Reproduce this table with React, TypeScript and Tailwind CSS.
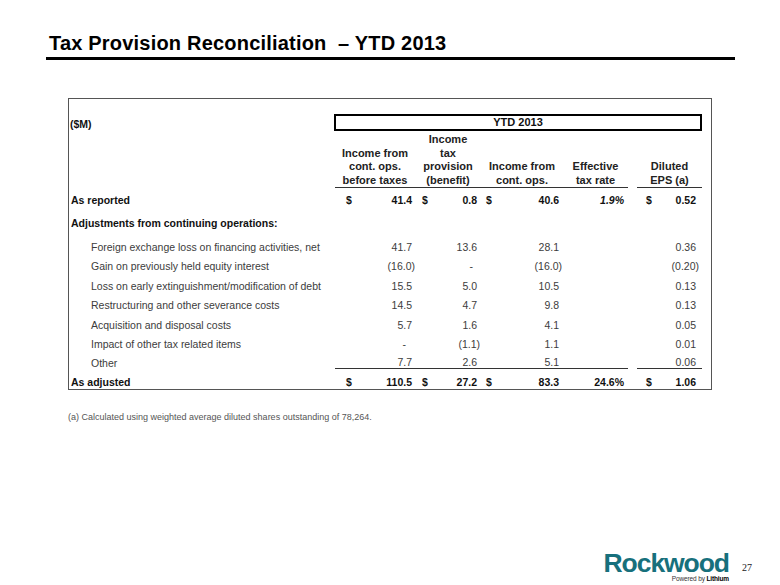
import React from "react";

type Col = {
  w: string;
  pl: string;
  pr: string;
  prParen: string;
  prDash: string;
};

// column geometry: c1..c4 share one underline, c5 (EPS) has its own
const cols: Col[] = [
  { w: "w-[80px]", pl: "pl-[11px]", pr: "pr-[3px]", prParen: "pr-0", prDash: "pr-[9px]" },
  { w: "w-[66px]", pl: "pl-[7px]", pr: "pr-[4px]", prParen: "pr-[1px]", prDash: "pr-[8px]" },
  { w: "w-[82px]", pl: "pl-[5px]", pr: "pr-[4px]", prParen: "pr-[1px]", prDash: "pr-[10px]" },
  { w: "w-[65px]", pl: "pl-0", pr: "pr-[4px]", prParen: "pr-[1px]", prDash: "pr-[10px]" },
  { w: "w-[65px]", pl: "pl-[9px]", pr: "pr-[6px]", prParen: "pr-[3px]", prDash: "pr-[12px]" },
];

interface Row {
  label: string;
  values: (string | null)[];
}

const adjustments: Row[] = [
  { label: "Foreign exchange loss on financing activities, net", values: ["41.7", "13.6", "28.1", null, "0.36"] },
  { label: "Gain on previously held equity interest", values: ["(16.0)", "-", "(16.0)", null, "(0.20)"] },
  { label: "Loss on early extinguishment/modification of debt", values: ["15.5", "5.0", "10.5", null, "0.13"] },
  { label: "Restructuring and other severance costs", values: ["14.5", "4.7", "9.8", null, "0.13"] },
  { label: "Acquisition and disposal costs", values: ["5.7", "1.6", "4.1", null, "0.05"] },
  { label: "Impact of other tax related items", values: ["-", "(1.1)", "1.1", null, "0.01"] },
];

function Cell({
  col,
  value,
  dollar,
  underline,
  extra,
}: {
  col: Col;
  value: string | null;
  dollar?: boolean;
  underline?: boolean;
  extra?: string;
}) {
  let pad = col.pr;
  if (value && value.startsWith("(")) pad = col.prParen;
  if (value === "-") pad = col.prDash;
  return (
    <div
      className={`${col.w} ${col.pl} ${pad} flex justify-between ${underline ? "border-b border-[#333]" : ""}`}
    >
      <span>{dollar ? "$" : ""}</span>
      <span className={extra}>{value ?? ""}</span>
    </div>
  );
}

function Spacer() {
  return <div className="w-[9px]" />;
}

function ValueCells({
  values,
  dollar,
  underline,
  italicRate,
}: {
  values: (string | null)[];
  dollar?: boolean;
  underline?: boolean;
  italicRate?: boolean;
}) {
  return (
    <>
      <Cell col={cols[0]} value={values[0]} dollar={dollar} underline={underline} />
      <Cell col={cols[1]} value={values[1]} dollar={dollar} underline={underline} />
      <Cell col={cols[2]} value={values[2]} dollar={dollar} underline={underline} />
      <Cell col={cols[3]} value={values[3]} underline={underline} extra={italicRate ? "italic" : ""} />
      <Spacer />
      <Cell col={cols[4]} value={values[4]} dollar={dollar} underline={underline} />
    </>
  );
}

export default function App() {
  return (
    <div className="w-[780px] h-[585px] bg-white flex flex-col font-['Liberation_Sans',Arial,sans-serif] text-[#333]">
      <div className="pl-[49px] pt-[33px] text-[20px] leading-[20px] font-bold tracking-[0.01em] text-black whitespace-pre">
        Tax Provision Reconciliation  – YTD 2013
      </div>
      <div className="ml-[46px] mt-[4px] w-[689px] h-[3px] bg-black" />

      <div className="ml-[68px] mt-[38px] w-[644px] border border-[#555] pl-px">
        {/* ($M) + YTD 2013 box */}
        <div className="flex pt-[15px] h-[34px]">
          <div className="w-[264px] pt-[2px] text-[10.5px] leading-[17px] font-bold text-[#111]">($M)</div>
          <div className="w-[368px] h-[17px] border-2 border-black flex items-center justify-center text-[11px] leading-[13px] font-bold text-[#111]">
            YTD 2013
          </div>
        </div>

        {/* column headers */}
        <div className="flex h-[55px] text-[11px] leading-[13.5px] font-bold text-[#222] text-center">
          <div className="w-[265px]" />
          <div className={`${cols[0].w} flex flex-col justify-end border-b border-[#333]`}>
            <div>Income from</div>
            <div>cont. ops.</div>
            <div>before taxes</div>
          </div>
          <div className={`${cols[1].w} flex flex-col justify-end border-b border-[#333]`}>
            <div>Income</div>
            <div>tax</div>
            <div>provision</div>
            <div>(benefit)</div>
          </div>
          <div className={`${cols[2].w} flex flex-col justify-end border-b border-[#333]`}>
            <div>Income from</div>
            <div>cont. ops.</div>
          </div>
          <div className={`${cols[3].w} flex flex-col justify-end border-b border-[#333]`}>
            <div>Effective</div>
            <div>tax rate</div>
          </div>
          <Spacer />
          <div className={`${cols[4].w} flex flex-col justify-end border-b border-[#333]`}>
            <div>Diluted</div>
            <div>EPS (a)</div>
          </div>
        </div>

        {/* As reported */}
        <div className="flex h-[24px] items-center text-[10.5px] leading-[12px] font-bold text-[#111]">
          <div className="w-[265px] pl-px">As reported</div>
          <ValueCells values={["41.4", "0.8", "40.6", "1.9%", "0.52"]} dollar italicRate />
        </div>

        {/* section heading */}
        <div className="flex h-[25px] items-center pb-[3px] text-[10.5px] leading-[12px] font-bold text-[#111]">
          <div className="pl-px">Adjustments from continuing operations:</div>
        </div>

        {adjustments.map((r) => (
          <div key={r.label} className="flex h-[19.5px] items-center text-[10.5px] leading-[12px] text-[#3c3c3c]">
            <div className="w-[265px] pl-[21px] whitespace-nowrap">{r.label}</div>
            <ValueCells values={r.values} />
          </div>
        ))}

        <div className="flex h-[15px] items-end text-[10.5px] leading-[12px] text-[#3c3c3c]">
          <div className="w-[265px] pl-[21px]">Other</div>
          <ValueCells values={["7.7", "2.6", "5.1", null, "0.06"]} underline />
        </div>

        {/* As adjusted */}
        <div className="flex h-[20px] items-end pb-px text-[10.5px] leading-[12px] font-bold text-[#111]">
          <div className="w-[265px] pl-px">As adjusted</div>
          <ValueCells values={["110.5", "27.2", "83.3", "24.6%", "1.06"]} dollar />
        </div>
      </div>

      <div className="ml-[68px] mt-[21px] text-[9px] leading-[12px] text-[#555]">
        (a) Calculated using weighted average diluted shares outstanding of 78,264.
      </div>

      {/* logo + page number */}
      <div className="mt-auto pb-[3.5px] pr-[28px] flex justify-end items-start gap-[13px]">
        <div className="flex flex-col items-end">
          <div className="text-[26.5px] leading-[20px] font-black tracking-[-0.04em] text-[#17707c]">
            Rockwood
          </div>
          <div className="mt-[1.5px] text-[6.5px] leading-[7px] tracking-[-0.02em] text-[#333]">
            Powered by <span className="font-bold text-black">Lithium</span>
          </div>
        </div>
        <div className="mt-[10px] text-[10px] leading-[10px] font-['Liberation_Serif',serif] text-[#222]">27</div>
      </div>
    </div>
  );
}
